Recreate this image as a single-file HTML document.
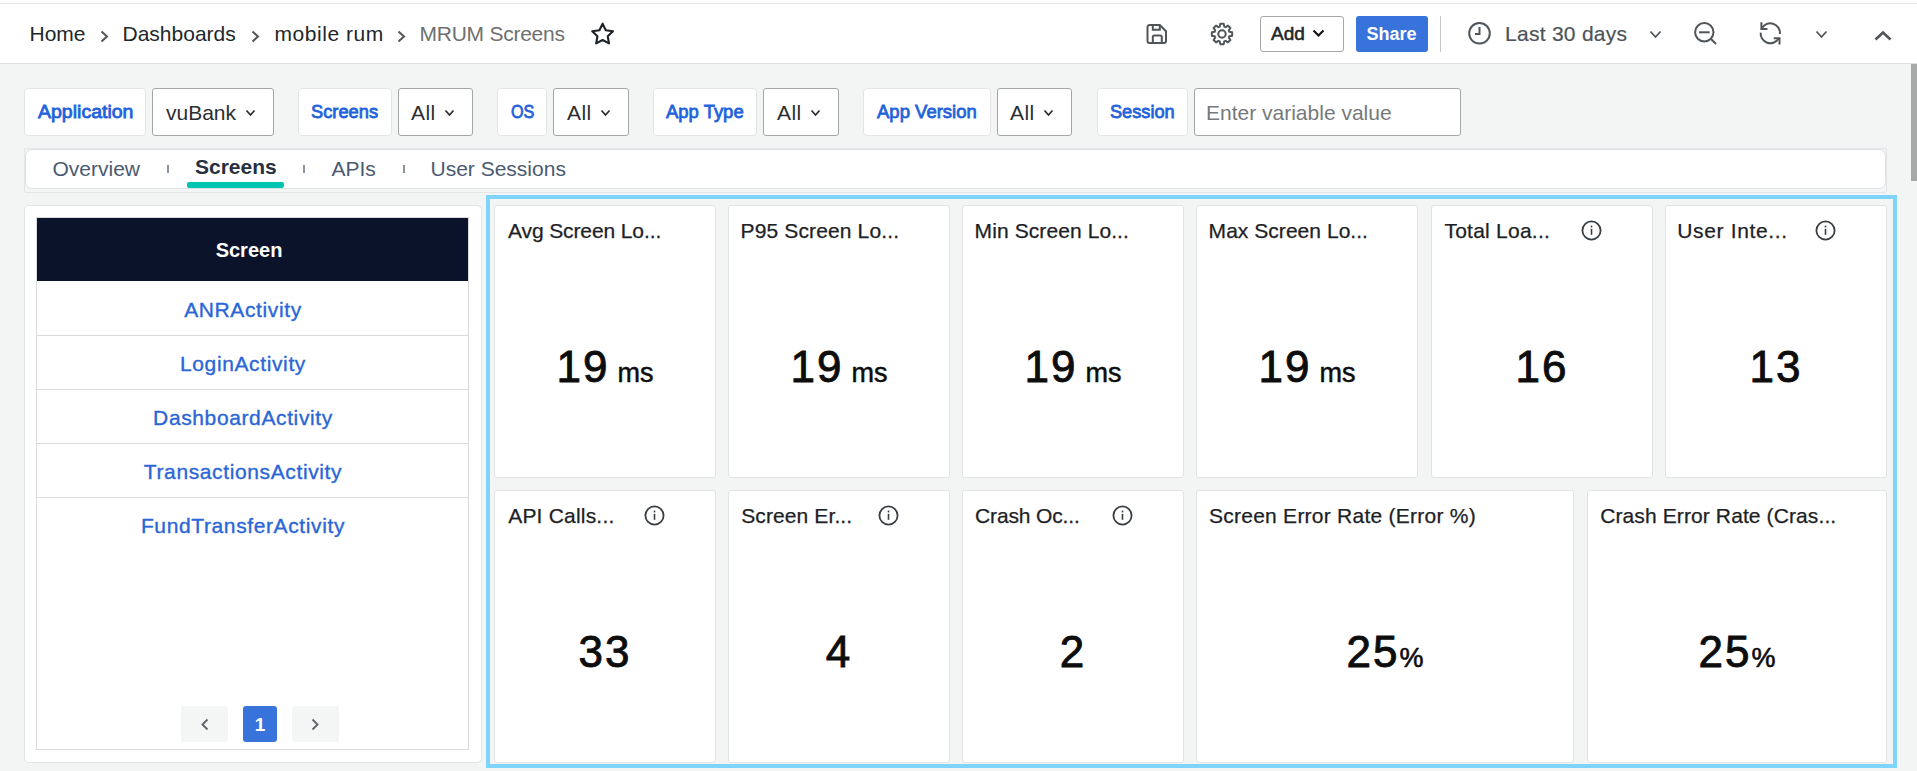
<!DOCTYPE html>
<html><head><meta charset="utf-8"><style>
html,body{margin:0;padding:0;width:1917px;height:771px;overflow:hidden;background:#f3f5f4;font-family:"Liberation Sans", sans-serif}
body>div,body>span,body>svg{position:absolute}
.t{position:absolute;line-height:1;white-space:nowrap}
</style></head><body>
<div style="left:0px;top:0px;width:1917px;height:64px;background:#fff"></div>
<div style="left:0px;top:3px;width:1917px;height:1px;background:#e4e4e4"></div>
<div style="left:0px;top:63px;width:1917px;height:1px;background:#e0e0e0"></div>
<span class="t" style="left:29.5px;top:23.22px;font-size:21px;color:#21272a;font-weight:400;">Home</span>
<svg style="left:100px;top:29.5px" width="9" height="13" viewBox="0 0 9 13"><polyline points="1.5,1.5 7,6.5 1.5,11.5" fill="none" stroke="#555" stroke-width="2"/></svg>
<span class="t" style="left:122.5px;top:23.22px;font-size:21px;color:#21272a;font-weight:400;">Dashboards</span>
<svg style="left:251px;top:29.5px" width="9" height="13" viewBox="0 0 9 13"><polyline points="1.5,1.5 7,6.5 1.5,11.5" fill="none" stroke="#555" stroke-width="2"/></svg>
<span class="t" style="left:274.5px;top:23.22px;font-size:21px;color:#21272a;font-weight:400;letter-spacing:0.55px">mobile rum</span>
<svg style="left:397px;top:29.5px" width="9" height="13" viewBox="0 0 9 13"><polyline points="1.5,1.5 7,6.5 1.5,11.5" fill="none" stroke="#555" stroke-width="2"/></svg>
<span class="t" style="left:419.5px;top:23.22px;font-size:21px;color:#6f6f6f;font-weight:400;letter-spacing:-0.25px">MRUM Screens</span>
<svg style="left:590px;top:21px" width="26" height="26" viewBox="0 0 26 26"><polygon points="12.60,2.70 15.77,9.23 22.97,10.23 17.74,15.27 19.01,22.42 12.60,19.00 6.19,22.42 7.46,15.27 2.23,10.23 9.43,9.23" fill="none" stroke="#1d2226" stroke-width="2.1" stroke-linejoin="round"/></svg>
<svg style="left:1145.5px;top:22.5px" width="23" height="23" viewBox="0 0 23 23"><path d="M3.5,2 H13.8 L20,8.2 V18 a2,2 0 0 1 -2,2 H3.5 a2,2 0 0 1 -2,-2 V4 a2,2 0 0 1 2,-2 Z" fill="none" stroke="#505559" stroke-width="2" stroke-linejoin="round"/><path d="M6.8,2 V6.8 H13.8 V2" fill="none" stroke="#505559" stroke-width="2"/><path d="M6.8,20 V14 a1.5,1.5 0 0 1 1.5,-1.5 H14.3 a1.5,1.5 0 0 1 1.5,1.5 V20" fill="none" stroke="#505559" stroke-width="2"/></svg>
<svg style="left:1209.5px;top:21.6px" width="24" height="24" viewBox="0 0 24 24"><polygon points="9.75,4.64 10.30,1.84 13.70,1.84 14.25,4.64 15.61,5.20 17.98,3.61 20.39,6.02 18.80,8.39 19.36,9.75 22.16,10.30 22.16,13.70 19.36,14.25 18.80,15.61 20.39,17.98 17.98,20.39 15.61,18.80 14.25,19.36 13.70,22.16 10.30,22.16 9.75,19.36 8.39,18.80 6.02,20.39 3.61,17.98 5.20,15.61 4.64,14.25 1.84,13.70 1.84,10.30 4.64,9.75 5.20,8.39 3.61,6.02 6.02,3.61 8.39,5.20" fill="none" stroke="#505559" stroke-width="2" stroke-linejoin="round"/><circle cx="12" cy="12" r="3.7" fill="none" stroke="#505559" stroke-width="2"/></svg>
<div style="left:1260px;top:16px;width:84px;height:36px;background:#fff;border:1px solid #a8a8a8;border-radius:3px;box-sizing:border-box"></div>
<span class="t" style="left:1271px;top:23.91px;font-size:19px;color:#21272a;font-weight:400;-webkit-text-stroke:0.55px #21272a">Add</span>
<svg style="left:1311.5px;top:28px" width="14" height="12" viewBox="0 0 14 12"><polyline points="1.5,2.5 6.5,7.5 11.5,2.5" fill="none" stroke="#161616" stroke-width="2.2"/></svg>
<div style="left:1356px;top:16px;width:72px;height:36px;background:#3873dc;border-radius:3px"></div>
<span class="t" style="left:1366.5px;top:25.26px;font-size:18px;color:#fff;font-weight:700;">Share</span>
<div style="left:1440px;top:16px;width:1px;height:36px;background:#c8c8c8"></div>
<svg style="left:1467px;top:21px" width="25" height="25" viewBox="0 0 25 25"><circle cx="12.5" cy="12.3" r="10.3" fill="none" stroke="#505559" stroke-width="2"/><polyline points="12.5,6 12.5,13 8,13" fill="none" stroke="#505559" stroke-width="2"/></svg>
<span class="t" style="left:1505px;top:23.22px;font-size:21px;color:#4d5358;font-weight:400;letter-spacing:0.27px;-webkit-text-stroke:0.2px #4d5358">Last 30 days</span>
<svg style="left:1648.5px;top:30px" width="13" height="9" viewBox="0 0 13 9"><polyline points="1.5,1.5 6.5,7 11.5,1.5" fill="none" stroke="#505559" stroke-width="1.8"/></svg>
<svg style="left:1692px;top:20px" width="27" height="27" viewBox="0 0 27 27"><circle cx="12.3" cy="12.3" r="9.2" fill="none" stroke="#505559" stroke-width="2"/><line x1="7" y1="12.3" x2="17.6" y2="12.3" stroke="#505559" stroke-width="2"/><line x1="19" y1="19" x2="24" y2="24" stroke="#505559" stroke-width="2"/></svg>
<svg style="left:1757px;top:20px" width="27" height="27" viewBox="0 0 27 27"><path d="M4.6,8.6 A9.7,9.7 0 0 1 22.9,14" fill="none" stroke="#505559" stroke-width="2"/><path d="M3.7,12.6 A9.7,9.7 0 0 0 21.5,18.8" fill="none" stroke="#505559" stroke-width="2"/><polyline points="4.4,2.3 4.4,8.9 10.4,8.9" fill="none" stroke="#505559" stroke-width="2"/><polyline points="16.7,18.2 22.5,18.2 22.5,24.5" fill="none" stroke="#505559" stroke-width="2"/></svg>
<svg style="left:1814.5px;top:30px" width="13" height="9" viewBox="0 0 13 9"><polyline points="1.5,1.5 6.5,7 11.5,1.5" fill="none" stroke="#505559" stroke-width="1.8"/></svg>
<svg style="left:1873px;top:29px" width="20" height="14" viewBox="0 0 20 14"><polyline points="2.5,10.5 10,3.5 17.5,10.5" fill="none" stroke="#505559" stroke-width="2.6"/></svg>
<div style="left:0px;top:64px;width:1917px;height:707px;background:#f3f5f4"></div>
<div style="left:1911px;top:64px;width:6px;height:117px;background:#a8a8a8"></div>
<div style="left:24px;top:88px;width:122px;height:48px;background:#fff;border:1px solid #e2e4e6;border-radius:4px;box-sizing:border-box"></div>
<span class="t" style="left:37.91px;top:102.41px;font-size:19px;color:#1f62dc;font-weight:400;transform:scaleX(1.0269);transform-origin:0 0;-webkit-text-stroke:0.8px #1f62dc">Application</span>
<div style="left:152px;top:88px;width:122px;height:48px;background:#fff;border:1px solid #a4a6a8;border-radius:3px;box-sizing:border-box"></div>
<span class="t" style="left:166px;top:102.22px;font-size:21px;color:#2b2e31;font-weight:400;">vuBank</span>
<svg style="left:245px;top:109px" width="11" height="8" viewBox="0 0 11 8"><polyline points="1.5,1.5 5.5,6 9.5,1.5" fill="none" stroke="#2b2e31" stroke-width="1.8"/></svg>
<div style="left:298px;top:88px;width:94px;height:48px;background:#fff;border:1px solid #e2e4e6;border-radius:4px;box-sizing:border-box"></div>
<span class="t" style="left:310.82px;top:102.41px;font-size:19px;color:#1f62dc;font-weight:400;transform:scaleX(0.9623);transform-origin:0 0;-webkit-text-stroke:0.8px #1f62dc">Screens</span>
<div style="left:398px;top:88px;width:75px;height:48px;background:#fff;border:1px solid #a4a6a8;border-radius:3px;box-sizing:border-box"></div>
<span class="t" style="left:411px;top:102.22px;font-size:21px;color:#2b2e31;font-weight:400;letter-spacing:0.4px">All</span>
<svg style="left:444px;top:109px" width="11" height="8" viewBox="0 0 11 8"><polyline points="1.5,1.5 5.5,6 9.5,1.5" fill="none" stroke="#2b2e31" stroke-width="1.8"/></svg>
<div style="left:497px;top:88px;width:50px;height:48px;background:#fff;border:1px solid #e2e4e6;border-radius:4px;box-sizing:border-box"></div>
<span class="t" style="left:510.7px;top:102.41px;font-size:19px;color:#1f62dc;font-weight:400;transform:scaleX(0.8519);transform-origin:0 0;-webkit-text-stroke:0.8px #1f62dc">OS</span>
<div style="left:553px;top:88px;width:76px;height:48px;background:#fff;border:1px solid #a4a6a8;border-radius:3px;box-sizing:border-box"></div>
<span class="t" style="left:567px;top:102.22px;font-size:21px;color:#2b2e31;font-weight:400;letter-spacing:0.4px">All</span>
<svg style="left:600px;top:109px" width="11" height="8" viewBox="0 0 11 8"><polyline points="1.5,1.5 5.5,6 9.5,1.5" fill="none" stroke="#2b2e31" stroke-width="1.8"/></svg>
<div style="left:653px;top:88px;width:104px;height:48px;background:#fff;border:1px solid #e2e4e6;border-radius:4px;box-sizing:border-box"></div>
<span class="t" style="left:666.49px;top:102.41px;font-size:19px;color:#1f62dc;font-weight:400;transform:scaleX(0.9713);transform-origin:0 0;-webkit-text-stroke:0.8px #1f62dc">App Type</span>
<div style="left:763px;top:88px;width:76px;height:48px;background:#fff;border:1px solid #a4a6a8;border-radius:3px;box-sizing:border-box"></div>
<span class="t" style="left:777px;top:102.22px;font-size:21px;color:#2b2e31;font-weight:400;letter-spacing:0.4px">All</span>
<svg style="left:810px;top:109px" width="11" height="8" viewBox="0 0 11 8"><polyline points="1.5,1.5 5.5,6 9.5,1.5" fill="none" stroke="#2b2e31" stroke-width="1.8"/></svg>
<div style="left:863px;top:88px;width:128px;height:48px;background:#fff;border:1px solid #e2e4e6;border-radius:4px;box-sizing:border-box"></div>
<span class="t" style="left:876.89px;top:102.41px;font-size:19px;color:#1f62dc;font-weight:400;transform:scaleX(0.9738);transform-origin:0 0;-webkit-text-stroke:0.8px #1f62dc">App Version</span>
<div style="left:997px;top:88px;width:75px;height:48px;background:#fff;border:1px solid #a4a6a8;border-radius:3px;box-sizing:border-box"></div>
<span class="t" style="left:1010px;top:102.22px;font-size:21px;color:#2b2e31;font-weight:400;letter-spacing:0.4px">All</span>
<svg style="left:1043px;top:109px" width="11" height="8" viewBox="0 0 11 8"><polyline points="1.5,1.5 5.5,6 9.5,1.5" fill="none" stroke="#2b2e31" stroke-width="1.8"/></svg>
<div style="left:1097px;top:88px;width:91px;height:48px;background:#fff;border:1px solid #e2e4e6;border-radius:4px;box-sizing:border-box"></div>
<span class="t" style="left:1109.8px;top:102.41px;font-size:19px;color:#1f62dc;font-weight:400;transform:scaleX(0.9567);transform-origin:0 0;-webkit-text-stroke:0.8px #1f62dc">Session</span>
<div style="left:1194px;top:88px;width:267px;height:48px;background:#fff;border:1px solid #a4a6a8;border-radius:3px;box-sizing:border-box"></div>
<span class="t" style="left:1206px;top:102.22px;font-size:21px;color:#76797c;font-weight:400;">Enter variable value</span>
<div style="left:24px;top:148px;width:1863px;height:45px;border:1px solid #e3e5e7;border-radius:2px;box-sizing:border-box"></div>
<div style="left:25px;top:149px;width:1861px;height:40px;background:#fff;border:1px solid #dde1e6;border-radius:7px;box-sizing:border-box"></div>
<span class="t" style="left:52.5px;top:157.72px;font-size:21px;color:#4a5a70;font-weight:400;">Overview</span>
<div style="left:167px;top:165px;width:2px;height:8px;background:#8a94a0"></div>
<span class="t" style="left:195px;top:155.72px;font-size:21px;color:#26303e;font-weight:700;">Screens</span>
<div style="left:187px;top:182px;width:97px;height:6px;background:#00c5b0;border-radius:2px"></div>
<div style="left:303px;top:165px;width:2px;height:8px;background:#8a94a0"></div>
<span class="t" style="left:331.5px;top:157.72px;font-size:21px;color:#4a5a70;font-weight:400;">APIs</span>
<div style="left:403px;top:165px;width:2px;height:8px;background:#8a94a0"></div>
<span class="t" style="left:430.5px;top:157.72px;font-size:21px;color:#4a5a70;font-weight:400;">User Sessions</span>
<div style="left:24px;top:205px;width:458px;height:558px;background:#fff;border:1px solid #e2e4e6;border-radius:5px;box-sizing:border-box"></div>
<div style="left:36px;top:217px;width:433px;height:533px;border:1px solid #dadada;box-sizing:border-box"></div>
<div style="left:37px;top:218px;width:431px;height:63px;background:#0b132b"></div>
<span class="t" style="left:-51px;width:600px;text-align:center;top:239.57px;font-size:20px;color:#fff;font-weight:700;">Screen</span>
<div style="left:37px;top:335px;width:431px;height:1px;background:#dcdcdc"></div>
<span class="t" style="left:-57px;width:600px;text-align:center;top:299.22px;font-size:21px;color:#2a66d6;font-weight:400;letter-spacing:0.62px;-webkit-text-stroke:0.35px #2a66d6">ANRActivity</span>
<div style="left:37px;top:389px;width:431px;height:1px;background:#dcdcdc"></div>
<span class="t" style="left:-57px;width:600px;text-align:center;top:353.22px;font-size:21px;color:#2a66d6;font-weight:400;letter-spacing:0.62px;-webkit-text-stroke:0.35px #2a66d6">LoginActivity</span>
<div style="left:37px;top:443px;width:431px;height:1px;background:#dcdcdc"></div>
<span class="t" style="left:-57px;width:600px;text-align:center;top:407.22px;font-size:21px;color:#2a66d6;font-weight:400;letter-spacing:0.62px;-webkit-text-stroke:0.35px #2a66d6">DashboardActivity</span>
<div style="left:37px;top:497px;width:431px;height:1px;background:#dcdcdc"></div>
<span class="t" style="left:-57px;width:600px;text-align:center;top:461.22px;font-size:21px;color:#2a66d6;font-weight:400;letter-spacing:0.62px;-webkit-text-stroke:0.35px #2a66d6">TransactionsActivity</span>
<span class="t" style="left:-57px;width:600px;text-align:center;top:515.22px;font-size:21px;color:#2a66d6;font-weight:400;letter-spacing:0.62px;-webkit-text-stroke:0.35px #2a66d6">FundTransferActivity</span>
<div style="left:181px;top:706px;width:47px;height:36px;background:#f4f6f6;border-radius:3px"></div>
<svg style="left:200.5px;top:718px" width="9" height="13" viewBox="0 0 9 13"><polyline points="6.5,1.5 1.5,6.5 6.5,11.5" fill="none" stroke="#62666a" stroke-width="1.9"/></svg>
<div style="left:243px;top:706px;width:34px;height:36px;background:#3873dc;border-radius:3px"></div>
<span class="t" style="left:-40px;width:600px;text-align:center;top:714.91px;font-size:19px;color:#fff;font-weight:700;">1</span>
<div style="left:292px;top:706px;width:47px;height:36px;background:#f4f6f6;border-radius:3px"></div>
<svg style="left:311px;top:718px" width="9" height="13" viewBox="0 0 9 13"><polyline points="1.5,1.5 6.5,6.5 1.5,11.5" fill="none" stroke="#62666a" stroke-width="1.9"/></svg>
<div style="left:486px;top:195px;width:1411px;height:573px;border:4px solid #7fd4fe;box-sizing:border-box"></div>
<div style="left:494px;top:205px;width:222px;height:273px;background:#fff;border:1px solid #e1e3e6;border-radius:3px;box-sizing:border-box"></div>
<span class="t" style="left:508px;top:220.22px;font-size:21px;color:#1d2226;font-weight:400;letter-spacing:-0.11px;-webkit-text-stroke:0.25px #1d2226">Avg Screen Lo...</span>
<div class="t" style="left:494px;width:222px;text-align:center;top:344.75px;font-size:44px;color:#0d0d0d;letter-spacing:2px;-webkit-text-stroke:0.9px #0d0d0d">19<span style="font-size:27px;margin-left:8px;letter-spacing:0;-webkit-text-stroke:0.5px #0d0d0d">ms</span></div>
<div style="left:728px;top:205px;width:222px;height:273px;background:#fff;border:1px solid #e1e3e6;border-radius:3px;box-sizing:border-box"></div>
<span class="t" style="left:740.5px;top:220.22px;font-size:21px;color:#1d2226;font-weight:400;letter-spacing:0.14px;-webkit-text-stroke:0.25px #1d2226">P95 Screen Lo...</span>
<div class="t" style="left:728px;width:222px;text-align:center;top:344.75px;font-size:44px;color:#0d0d0d;letter-spacing:2px;-webkit-text-stroke:0.9px #0d0d0d">19<span style="font-size:27px;margin-left:8px;letter-spacing:0;-webkit-text-stroke:0.5px #0d0d0d">ms</span></div>
<div style="left:962px;top:205px;width:222px;height:273px;background:#fff;border:1px solid #e1e3e6;border-radius:3px;box-sizing:border-box"></div>
<span class="t" style="left:974.6px;top:220.22px;font-size:21px;color:#1d2226;font-weight:400;letter-spacing:0.09px;-webkit-text-stroke:0.25px #1d2226">Min Screen Lo...</span>
<div class="t" style="left:962px;width:222px;text-align:center;top:344.75px;font-size:44px;color:#0d0d0d;letter-spacing:2px;-webkit-text-stroke:0.9px #0d0d0d">19<span style="font-size:27px;margin-left:8px;letter-spacing:0;-webkit-text-stroke:0.5px #0d0d0d">ms</span></div>
<div style="left:1196px;top:205px;width:222px;height:273px;background:#fff;border:1px solid #e1e3e6;border-radius:3px;box-sizing:border-box"></div>
<span class="t" style="left:1208.6px;top:220.22px;font-size:21px;color:#1d2226;font-weight:400;letter-spacing:0.04px;-webkit-text-stroke:0.25px #1d2226">Max Screen Lo...</span>
<div class="t" style="left:1196px;width:222px;text-align:center;top:344.75px;font-size:44px;color:#0d0d0d;letter-spacing:2px;-webkit-text-stroke:0.9px #0d0d0d">19<span style="font-size:27px;margin-left:8px;letter-spacing:0;-webkit-text-stroke:0.5px #0d0d0d">ms</span></div>
<div style="left:1431px;top:205px;width:222px;height:273px;background:#fff;border:1px solid #e1e3e6;border-radius:3px;box-sizing:border-box"></div>
<span class="t" style="left:1444.4px;top:220.22px;font-size:21px;color:#1d2226;font-weight:400;letter-spacing:0.25px;-webkit-text-stroke:0.25px #1d2226">Total Loa...</span>
<svg style="left:1581.0px;top:219.5px" width="21" height="21" viewBox="0 0 21 21"><circle cx="10.5" cy="10.5" r="9.1" fill="none" stroke="#3a3f44" stroke-width="1.8"/><rect x="9.7" y="8.8" width="1.6" height="6" fill="#3a3f44"/><rect x="9.7" y="5.6" width="1.6" height="1.8" fill="#3a3f44"/></svg>
<div class="t" style="left:1431px;width:222px;text-align:center;top:344.75px;font-size:44px;color:#0d0d0d;letter-spacing:2px;-webkit-text-stroke:0.9px #0d0d0d">16</div>
<div style="left:1665px;top:205px;width:222px;height:273px;background:#fff;border:1px solid #e1e3e6;border-radius:3px;box-sizing:border-box"></div>
<span class="t" style="left:1677.2px;top:220.22px;font-size:21px;color:#1d2226;font-weight:400;letter-spacing:0.66px;-webkit-text-stroke:0.25px #1d2226">User Inte...</span>
<svg style="left:1815.0px;top:219.5px" width="21" height="21" viewBox="0 0 21 21"><circle cx="10.5" cy="10.5" r="9.1" fill="none" stroke="#3a3f44" stroke-width="1.8"/><rect x="9.7" y="8.8" width="1.6" height="6" fill="#3a3f44"/><rect x="9.7" y="5.6" width="1.6" height="1.8" fill="#3a3f44"/></svg>
<div class="t" style="left:1665px;width:222px;text-align:center;top:344.75px;font-size:44px;color:#0d0d0d;letter-spacing:2px;-webkit-text-stroke:0.9px #0d0d0d">13</div>
<div style="left:494px;top:490px;width:222px;height:273px;background:#fff;border:1px solid #e1e3e6;border-radius:3px;box-sizing:border-box"></div>
<span class="t" style="left:508.2px;top:505.22px;font-size:21px;color:#1d2226;font-weight:400;letter-spacing:0.2px;-webkit-text-stroke:0.25px #1d2226">API Calls...</span>
<svg style="left:644.0px;top:504.5px" width="21" height="21" viewBox="0 0 21 21"><circle cx="10.5" cy="10.5" r="9.1" fill="none" stroke="#3a3f44" stroke-width="1.8"/><rect x="9.7" y="8.8" width="1.6" height="6" fill="#3a3f44"/><rect x="9.7" y="5.6" width="1.6" height="1.8" fill="#3a3f44"/></svg>
<div class="t" style="left:494px;width:222px;text-align:center;top:629.75px;font-size:44px;color:#0d0d0d;letter-spacing:2px;-webkit-text-stroke:0.9px #0d0d0d">33</div>
<div style="left:728px;top:490px;width:222px;height:273px;background:#fff;border:1px solid #e1e3e6;border-radius:3px;box-sizing:border-box"></div>
<span class="t" style="left:741.2px;top:505.22px;font-size:21px;color:#1d2226;font-weight:400;letter-spacing:0.11px;-webkit-text-stroke:0.25px #1d2226">Screen Er...</span>
<svg style="left:878.0px;top:504.5px" width="21" height="21" viewBox="0 0 21 21"><circle cx="10.5" cy="10.5" r="9.1" fill="none" stroke="#3a3f44" stroke-width="1.8"/><rect x="9.7" y="8.8" width="1.6" height="6" fill="#3a3f44"/><rect x="9.7" y="5.6" width="1.6" height="1.8" fill="#3a3f44"/></svg>
<div class="t" style="left:728px;width:222px;text-align:center;top:629.75px;font-size:44px;color:#0d0d0d;letter-spacing:2px;-webkit-text-stroke:0.9px #0d0d0d">4</div>
<div style="left:962px;top:490px;width:222px;height:273px;background:#fff;border:1px solid #e1e3e6;border-radius:3px;box-sizing:border-box"></div>
<span class="t" style="left:975px;top:505.22px;font-size:21px;color:#1d2226;font-weight:400;letter-spacing:-0.14px;-webkit-text-stroke:0.25px #1d2226">Crash Oc...</span>
<svg style="left:1112.0px;top:504.5px" width="21" height="21" viewBox="0 0 21 21"><circle cx="10.5" cy="10.5" r="9.1" fill="none" stroke="#3a3f44" stroke-width="1.8"/><rect x="9.7" y="8.8" width="1.6" height="6" fill="#3a3f44"/><rect x="9.7" y="5.6" width="1.6" height="1.8" fill="#3a3f44"/></svg>
<div class="t" style="left:962px;width:222px;text-align:center;top:629.75px;font-size:44px;color:#0d0d0d;letter-spacing:2px;-webkit-text-stroke:0.9px #0d0d0d">2</div>
<div style="left:1196px;top:490px;width:378px;height:273px;background:#fff;border:1px solid #e1e3e6;border-radius:3px;box-sizing:border-box"></div>
<span class="t" style="left:1209px;top:505.22px;font-size:21px;color:#1d2226;font-weight:400;letter-spacing:0.25px;-webkit-text-stroke:0.25px #1d2226">Screen Error Rate (Error %)</span>
<div class="t" style="left:1196px;width:378px;text-align:center;top:629.75px;font-size:44px;color:#0d0d0d;letter-spacing:2px;-webkit-text-stroke:0.9px #0d0d0d">25<span style="font-size:27px;letter-spacing:0;-webkit-text-stroke:0.6px #0d0d0d">%</span></div>
<div style="left:1587px;top:490px;width:300px;height:273px;background:#fff;border:1px solid #e1e3e6;border-radius:3px;box-sizing:border-box"></div>
<span class="t" style="left:1600.2px;top:505.22px;font-size:21px;color:#1d2226;font-weight:400;letter-spacing:0.11px;-webkit-text-stroke:0.25px #1d2226">Crash Error Rate (Cras...</span>
<div class="t" style="left:1587px;width:300px;text-align:center;top:629.75px;font-size:44px;color:#0d0d0d;letter-spacing:2px;-webkit-text-stroke:0.9px #0d0d0d">25<span style="font-size:27px;letter-spacing:0;-webkit-text-stroke:0.6px #0d0d0d">%</span></div>
</body></html>
